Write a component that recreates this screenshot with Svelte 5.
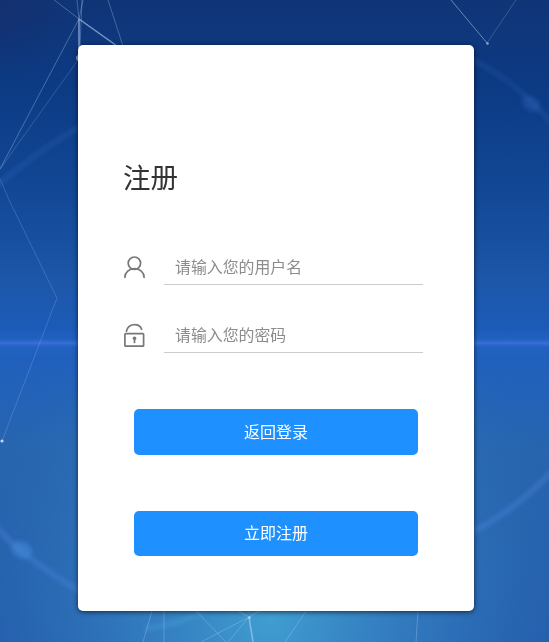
<script lang="ts">
interface Field {
	readonly name: string;
	readonly type: string;
	readonly placeholder: string;
}

const fields: readonly Field[] = [
	{ name: 'username', type: 'text', placeholder: '请输入您的用户名' },
	{ name: 'password', type: 'password', placeholder: '请输入您的密码' }
];

let values: Record<string, string> = $state({ username: '', password: '' });
</script>

<main class="page">
	<svg class="backdrop" viewBox="0 0 549 642" preserveAspectRatio="none" aria-hidden="true">
		<defs>
			<linearGradient id="sky" x1="0" y1="0" x2="0" y2="1">
				<stop offset="0" stop-color="#103577" />
				<stop offset="0.13" stop-color="#0c3a83" />
				<stop offset="0.3" stop-color="#124896" />
				<stop offset="0.44" stop-color="#1d57a9" />
				<stop offset="0.51" stop-color="#1b5bb8" />
				<stop offset="0.56" stop-color="#2060bd" />
				<stop offset="0.7" stop-color="#2765ae" />
				<stop offset="1" stop-color="#235cab" />
			</linearGradient>
			<radialGradient id="glow">
				<stop offset="0" stop-color="#43a5d5" stop-opacity="0.9" />
				<stop offset="0.5" stop-color="#3b8bca" stop-opacity="0.5" />
				<stop offset="1" stop-color="#2f73ba" stop-opacity="0" />
			</radialGradient>
			<linearGradient id="horizon" x1="0" y1="0" x2="0" y2="1">
				<stop offset="0" stop-color="#356fdc" stop-opacity="0" />
				<stop offset="0.35" stop-color="#3069d4" stop-opacity="0.25" />
				<stop offset="0.5" stop-color="#3f75dd" stop-opacity="0.8" />
				<stop offset="0.65" stop-color="#3069d4" stop-opacity="0.25" />
				<stop offset="1" stop-color="#286bd0" stop-opacity="0" />
			</linearGradient>
			<radialGradient id="corner">
				<stop offset="0" stop-color="#1a2866" stop-opacity="0.45" />
				<stop offset="1" stop-color="#1a2866" stop-opacity="0" />
			</radialGradient>
			<filter id="soft" x="-20%" y="-20%" width="140%" height="140%">
				<feGaussianBlur stdDeviation="2" />
			</filter>
		</defs>

		<rect width="549" height="642" fill="url(#sky)" />
		<circle cx="0" cy="0" r="80" fill="url(#corner)" />
		<ellipse cx="270" cy="620" rx="320" ry="340" fill="url(#glow)" />
		<rect y="329" width="549" height="28" fill="url(#horizon)" />

		<g filter="url(#soft)" fill="none" stroke="#5085df">
			<path d="M-6 188Q36 152 84 124" stroke-width="5" opacity="0.17" />
			<path d="M470 59Q514 78 555 127" stroke-width="5" opacity="0.15" />
			<ellipse cx="531" cy="104" rx="10" ry="7" transform="rotate(35 531 104)" fill="#4478d3" stroke="none" opacity="0.25" />
			<path d="M-5 524Q14 552 84 594" stroke-width="5" opacity="0.42" />
			<ellipse cx="22" cy="550" rx="11" ry="8" transform="rotate(25 22 550)" fill="#4385d5" stroke="none" opacity="0.65" />
			<path d="M468 534Q516 511 555 468" stroke-width="5" opacity="0.42" />
			<path d="M145 629Q180 624 205 611" stroke="#4ba3d8" stroke-width="5" opacity="0.4" />
		</g>

		<g fill="none" stroke="#c4dafa" stroke-width="1">
			<path d="M53 -1L79 19L0 169" opacity="0.32" />
			<path d="M0 179L9 200L57 298L2 441" opacity="0.2" />
			<path d="M78 60L0 169" opacity="0.2" />
			<path d="M77 0L79 19L83 0M82 0L80 46M108 0L123 46" opacity="0.3" />
			<path d="M79 19L79 48M79 19L117 46" stroke-width="1.5" opacity="0.6" />
			<path d="M451 0L487 43" opacity="0.5" />
			<path d="M487 43L516 0" opacity="0.22" />
			<path d="M152 611L143 642M164 611V642M196 611L226 642M238 611L249 617L201 642M249 617L260 611M249 617L228 642M306 611L285 642M418 611L416 642" opacity="0.28" />
			<path d="M249 617L253 642" stroke-width="1.6" opacity="0.5" />
		</g>
		<g fill="#dae8fc">
			<circle cx="79" cy="58" r="3" opacity="0.6" />
			<circle cx="487.5" cy="43.5" r="1.3" opacity="0.6" />
			<circle cx="249.5" cy="617.5" r="1.3" opacity="0.6" />
			<circle cx="2" cy="441" r="1.6" opacity="0.85" />
		</g>
	</svg>

	<form class="card" onsubmit={(e) => e.preventDefault()}>
		<h1 class="title">注册</h1>

		{#each fields as field (field.name)}
			<label class="field">
				<svg class="icon" viewBox="0 0 24 24" aria-hidden="true">
					{#if field.name === 'username'}
						<circle cx="11.4" cy="8.2" r="6.2" />
						<path d="M1.9 22.3A9.6 8.6 0 0 1 21.1 22.3" />
					{:else}
						<rect x="1.9" y="10.6" width="18.7" height="12.6" rx="0.8" />
						<path d="M3.4 8.2C5.3 -0.2 16.2 0 18.6 6.2" />
						<circle class="solid" cx="11.5" cy="15.3" r="1.8" />
						<path d="M11.5 16V19.4" />
					{/if}
				</svg>
				<input
					class="input"
					type={field.type}
					name={field.name}
					placeholder={field.placeholder}
					autocomplete="off"
					bind:value={values[field.name]}
				/>
			</label>
		{/each}

		<div class="actions">
			<button class="button" type="button">返回登录</button>
			<button class="button" type="submit">立即注册</button>
		</div>
	</form>
</main>

<style>
	:global(body) {
		margin: 0;
		overflow: hidden;
	}

	.page {
		position: relative;
		box-sizing: border-box;
		height: 642px;
		padding: 45px 75px 31px 78px;
		font-family: "Noto Sans CJK SC", sans-serif;
	}

	.backdrop {
		position: absolute;
		inset: 0;
		width: 100%;
		height: 100%;
	}

	.card {
		position: relative;
		box-sizing: border-box;
		width: 396px;
		height: 566px;
		padding: 109px 51px 0 45px;
		border-radius: 5px;
		background: #fff;
		box-shadow: 0 1px 5px rgba(0, 0, 0, 0.65);
	}

	.title {
		margin: 0 0 52px;
		color: #333;
		font-size: 27.5px;
		font-weight: 400;
		line-height: 44px;
	}

	.field {
		display: flex;
		align-items: flex-start;
		gap: 17px;
		height: 35px;
		margin-bottom: 33px;
	}

	.icon {
		flex: none;
		width: 24px;
		height: 24px;
		margin-top: 5px;
		fill: none;
		stroke: #777;
		stroke-width: 1.7;
		stroke-linecap: round;
	}

	.icon .solid {
		fill: #777;
		stroke: none;
	}

	.input {
		box-sizing: border-box;
		flex: none;
		width: 259px;
		height: 35px;
		padding: 0 11px 2px;
		border: 0;
		border-bottom: 1px solid #ccc;
		outline: none;
		background: transparent;
		color: #333;
		font: 400 15.9px "Noto Sans CJK SC", sans-serif;
	}

	.input::placeholder {
		color: #8c8c8c;
		opacity: 1;
	}

	.actions {
		display: grid;
		gap: 56px;
		padding: 23px 5px 0 11px;
	}

	.button {
		width: 284px;
		height: 46px;
		padding: 0 0 3px;
		border: 0;
		border-radius: 5px;
		background: #1e90ff;
		color: #fff;
		font: 400 16px "Noto Sans CJK SC", sans-serif;
	}

	.button:last-child {
		height: 45px;
	}
</style>
